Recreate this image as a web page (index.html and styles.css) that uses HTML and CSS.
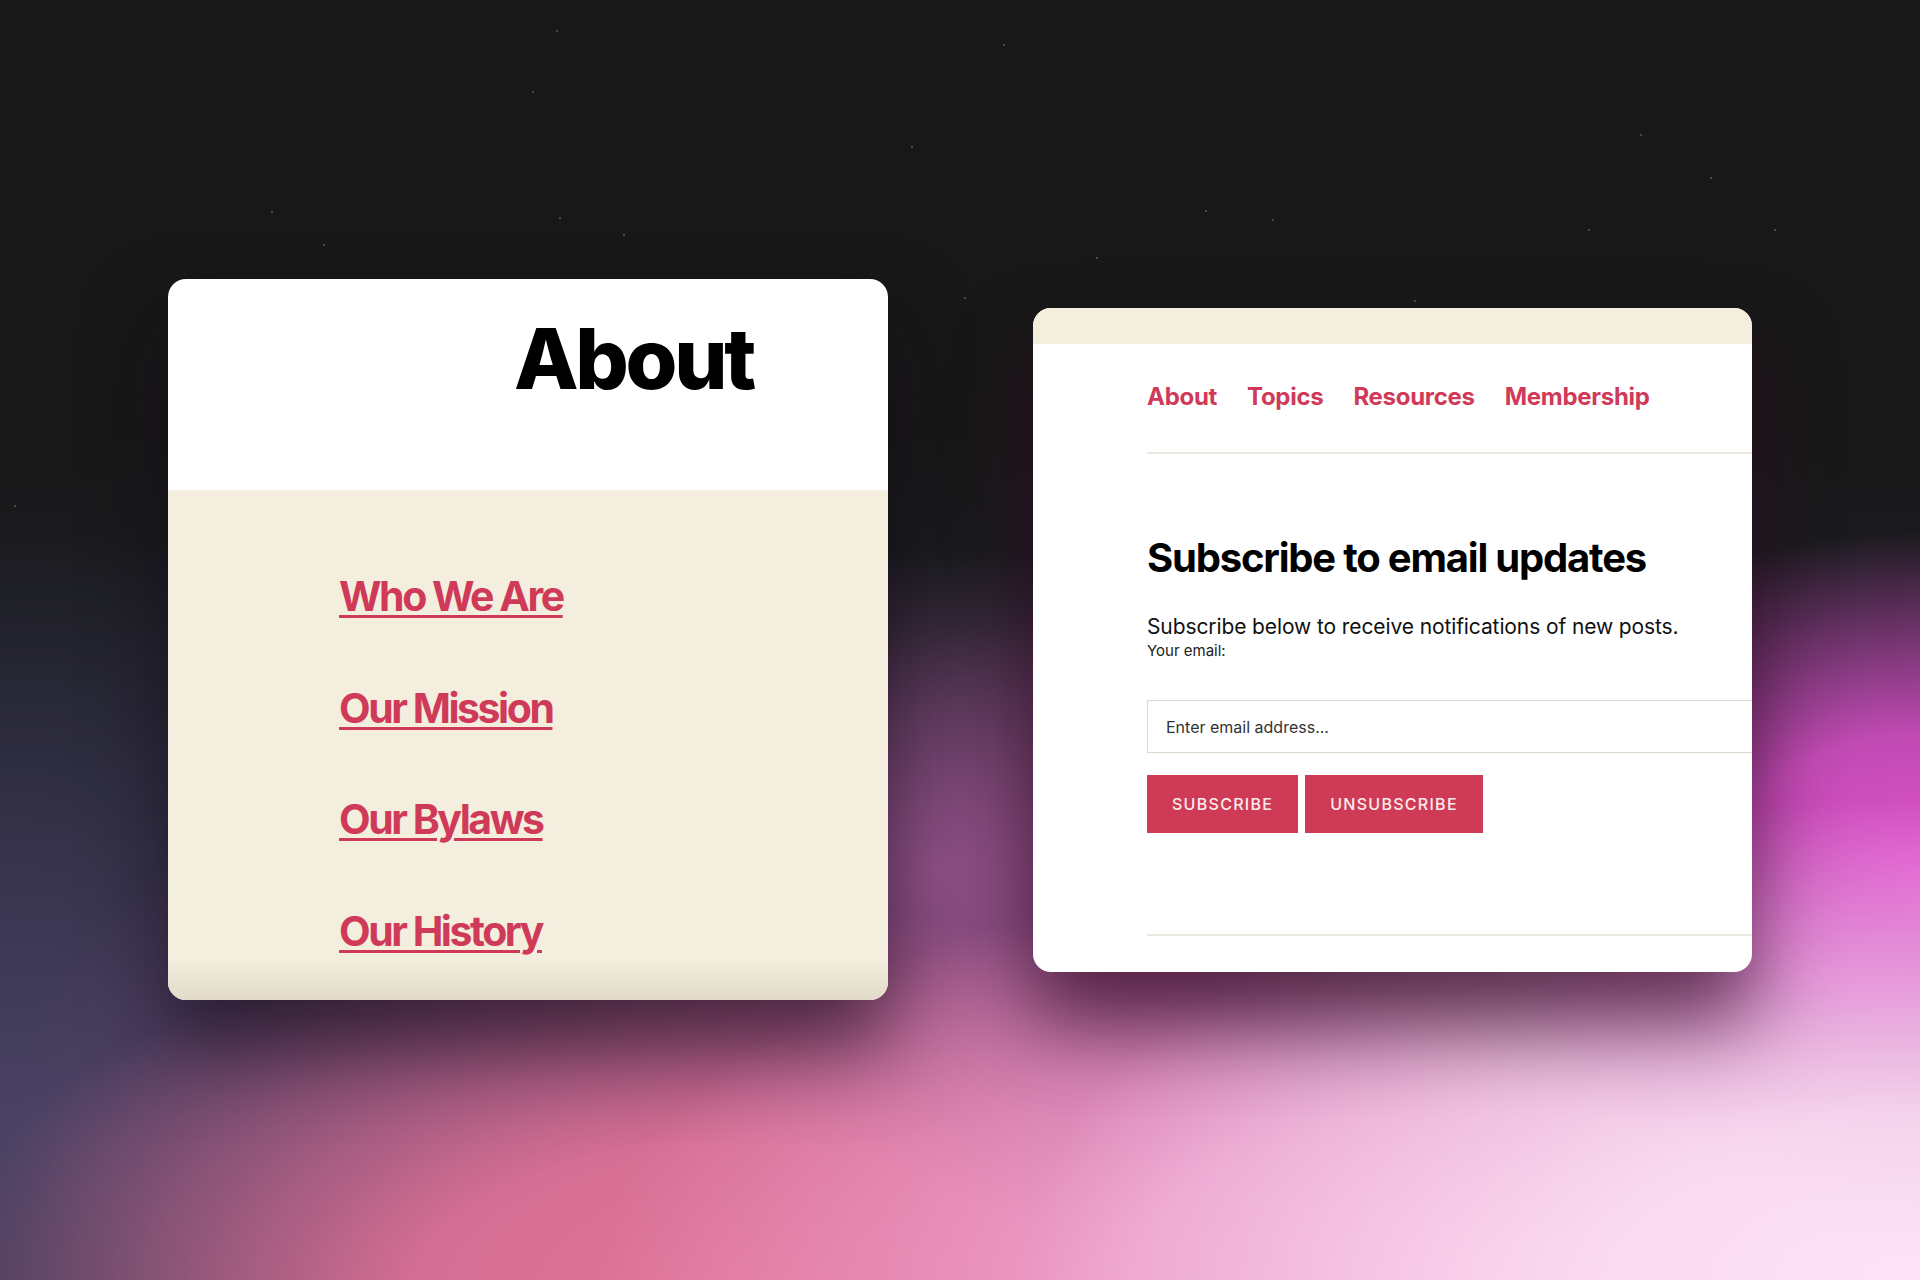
FILE: index.html
```html
<!DOCTYPE html>
<html lang="en">
<head>
<meta charset="UTF-8" />
<meta name="viewport" content="width=device-width, initial-scale=1" />
<title>About &amp; Subscribe</title>
<link rel="stylesheet" href="styles.css">
</head>
<body>

  <!-- faint stars on the night sky -->
  <svg class="stars" viewBox="0 0 1920 1280" width="1920" height="1280" aria-hidden="true">
    <circle cx="557" cy="31" r="1" />
    <circle cx="1004" cy="45" r="1" />
    <circle cx="533" cy="92" r="1" />
    <circle cx="912" cy="147" r="1" />
    <circle cx="1641" cy="135" r="1" />
    <circle cx="560" cy="218" r="1" />
    <circle cx="624" cy="235" r="1" />
    <circle cx="1206" cy="211" r="1" />
    <circle cx="1273" cy="220" r="1" />
    <circle cx="1589" cy="230" r="1" />
    <circle cx="1775" cy="230" r="1" />
    <circle cx="272" cy="212" r="1" />
    <circle cx="324" cy="245" r="1" />
    <circle cx="1097" cy="258" r="1" />
    <circle cx="965" cy="298" r="1" />
    <circle cx="15" cy="506" r="1" />
    <circle cx="1524" cy="389" r="1" />
    <circle cx="55" cy="1161" r="1" />
    <circle cx="1711" cy="178" r="1" />
    <circle cx="1415" cy="301" r="1" />
  </svg>

  <div class="stage">

    <section class="card about-card">
      <header class="about-head">
        <h1>About</h1>
      </header>
      <ul class="about-links">
        <li><a href="#">Who We Are</a></li>
        <li><a href="#">Our Mission</a></li>
        <li><a href="#">Our Bylaws</a></li>
        <li><a href="#">Our History</a></li>
      </ul>
    </section>

    <section class="card subscribe-card">
      <div class="strip"></div>
      <div class="subscribe-inner">
        <nav class="site-nav">
          <a href="#">About</a>
          <a href="#">Topics</a>
          <a href="#">Resources</a>
          <a href="#">Membership</a>
        </nav>

        <h2>Subscribe to email updates</h2>
        <p class="lead">Subscribe below to receive notifications of new posts.</p>
        <label for="email">Your email:</label>
        <input id="email" type="email" placeholder="Enter email address...">

        <div class="actions">
          <button type="button">Subscribe</button>
          <button type="button">Unsubscribe</button>
        </div>

        <hr class="rule">
      </div>
    </section>

  </div>

</body>
</html>
```

FILE: styles.css
```css
body {
  margin: 0;
  width: 1920px;
  height: 1280px;
  overflow: hidden;
  position: relative;
  font-family: 'Inter', 'Noto Sans', sans-serif;
  background-color: #181818;
  background-image:
    radial-gradient(ellipse 900px 480px at 100% 100%, #fde4f6 0%, rgba(253, 228, 246, 0.85) 35%, rgba(253, 228, 246, 0) 100%),
    radial-gradient(ellipse 460px 340px at 100% 68%, #de52cc 0%, rgba(222, 82, 204, 0.85) 40%, rgba(222, 82, 204, 0) 100%),
    radial-gradient(ellipse 900px 430px at 78% 100%, #f4a8d6 0%, rgba(244, 168, 214, 0.85) 40%, rgba(244, 168, 214, 0) 100%),
    radial-gradient(ellipse 800px 400px at 38% 102%, #e27498 0%, rgba(226, 116, 152, 0.9) 40%, rgba(226, 116, 152, 0) 100%),
    radial-gradient(ellipse 420px 320px at 49% 68%, rgba(150, 84, 140, 0.9), rgba(150, 84, 140, 0) 100%),
    radial-gradient(ellipse 1100px 480px at 58% 86%, rgba(176, 84, 156, 0.85), rgba(176, 84, 156, 0) 100%),
    radial-gradient(ellipse 700px 600px at 0% 88%, #4a4264, rgba(74, 66, 100, 0) 100%),
    linear-gradient(#181818 0%, #181818 34%, #1c1f28 58%, #2a2a42 100%);
}

.stars {
  position: absolute;
  top: 0;
  left: 0;
  fill: #5a5a5a;
}

.stage {
  position: relative;
  display: flex;
  align-items: flex-start;
  gap: 145px;
  padding: 279px 0 0 168px;
}

.card {
  border-radius: 18px;
  overflow: hidden;
  box-sizing: border-box;
}

/* Tarjeta izquierda: cabecera blanca + enlaces */
.about-card {
  width: 720px;
  background: #fff;
  box-shadow: 0 48px 80px rgba(20, 10, 24, 0.6);
}

.about-head {
  height: 211px;
  box-sizing: border-box;
  padding: 38px 0 0 346px;
}

.about-head h1 {
  margin: 0;
  font-size: 84px;
  line-height: 84px;
  font-weight: 800;
  letter-spacing: -0.04em;
  color: #000;
}

.about-links {
  list-style: none;
  margin: 0;
  padding: 81px 0 44px 171px;
  background: linear-gradient(to bottom, #f4eedf calc(100% - 42px), #e2dbca);
  display: flex;
  flex-direction: column;
  gap: 61.5px;
}

.about-links li {
  font-size: 41px;
  line-height: 50px;
}

.about-links a {
  font-weight: 700;
  letter-spacing: -0.06em;
  color: #d03a59;
  text-decoration: underline;
  text-decoration-thickness: 3px;
  text-underline-offset: 4px;
}

/* Tarjeta derecha: formulario de suscripcion */
.subscribe-card {
  width: 719px;
  height: 664px;
  margin-top: 29px;
  background: #fff;
  box-shadow: 0 50px 80px rgba(50, 10, 36, 0.7);
}

.strip {
  height: 36px;
  background: #f4eedf;
}

.subscribe-inner {
  width: 760px;
  padding-left: 114px;
}

.site-nav {
  display: flex;
  gap: 30px;
  padding: 38px 0 40px;
  border-bottom: 2px solid #ebe7dc;
}

.site-nav a {
  font-size: 24px;
  line-height: 30px;
  font-weight: 700;
  letter-spacing: -0.012em;
  color: #d03a59;
  text-decoration: none;
}

.subscribe-inner h2 {
  margin: 80px 0 30px;
  font-size: 40px;
  line-height: 48px;
  font-weight: 700;
  letter-spacing: -0.03em;
  color: #000;
}

.lead {
  margin: 0;
  font-size: 21px;
  line-height: 30px;
  letter-spacing: -0.005em;
  color: #111;
}

.subscribe-inner label {
  display: block;
  font-size: 15px;
  line-height: 18px;
  color: #222;
}

.subscribe-inner input {
  display: block;
  box-sizing: border-box;
  width: 100%;
  height: 53px;
  margin-top: 40px;
  padding: 0 18px;
  border: 1px solid #ddd8cc;
  font-family: inherit;
  font-size: 16px;
  color: #222;
  outline: none;
}

.subscribe-inner input::placeholder {
  color: #333;
}

.actions {
  display: flex;
  gap: 7px;
  margin-top: 22px;
}

.actions button {
  height: 58px;
  padding: 0 25px;
  border: 0;
  background: #cf3b56;
  color: #fbecee;
  font-family: inherit;
  font-size: 16px;
  font-weight: 500;
  letter-spacing: 0.08em;
  text-transform: uppercase;
}

.rule {
  margin: 101px 0 0;
  border: 0;
  border-top: 2px solid #ebe7dc;
}
```
